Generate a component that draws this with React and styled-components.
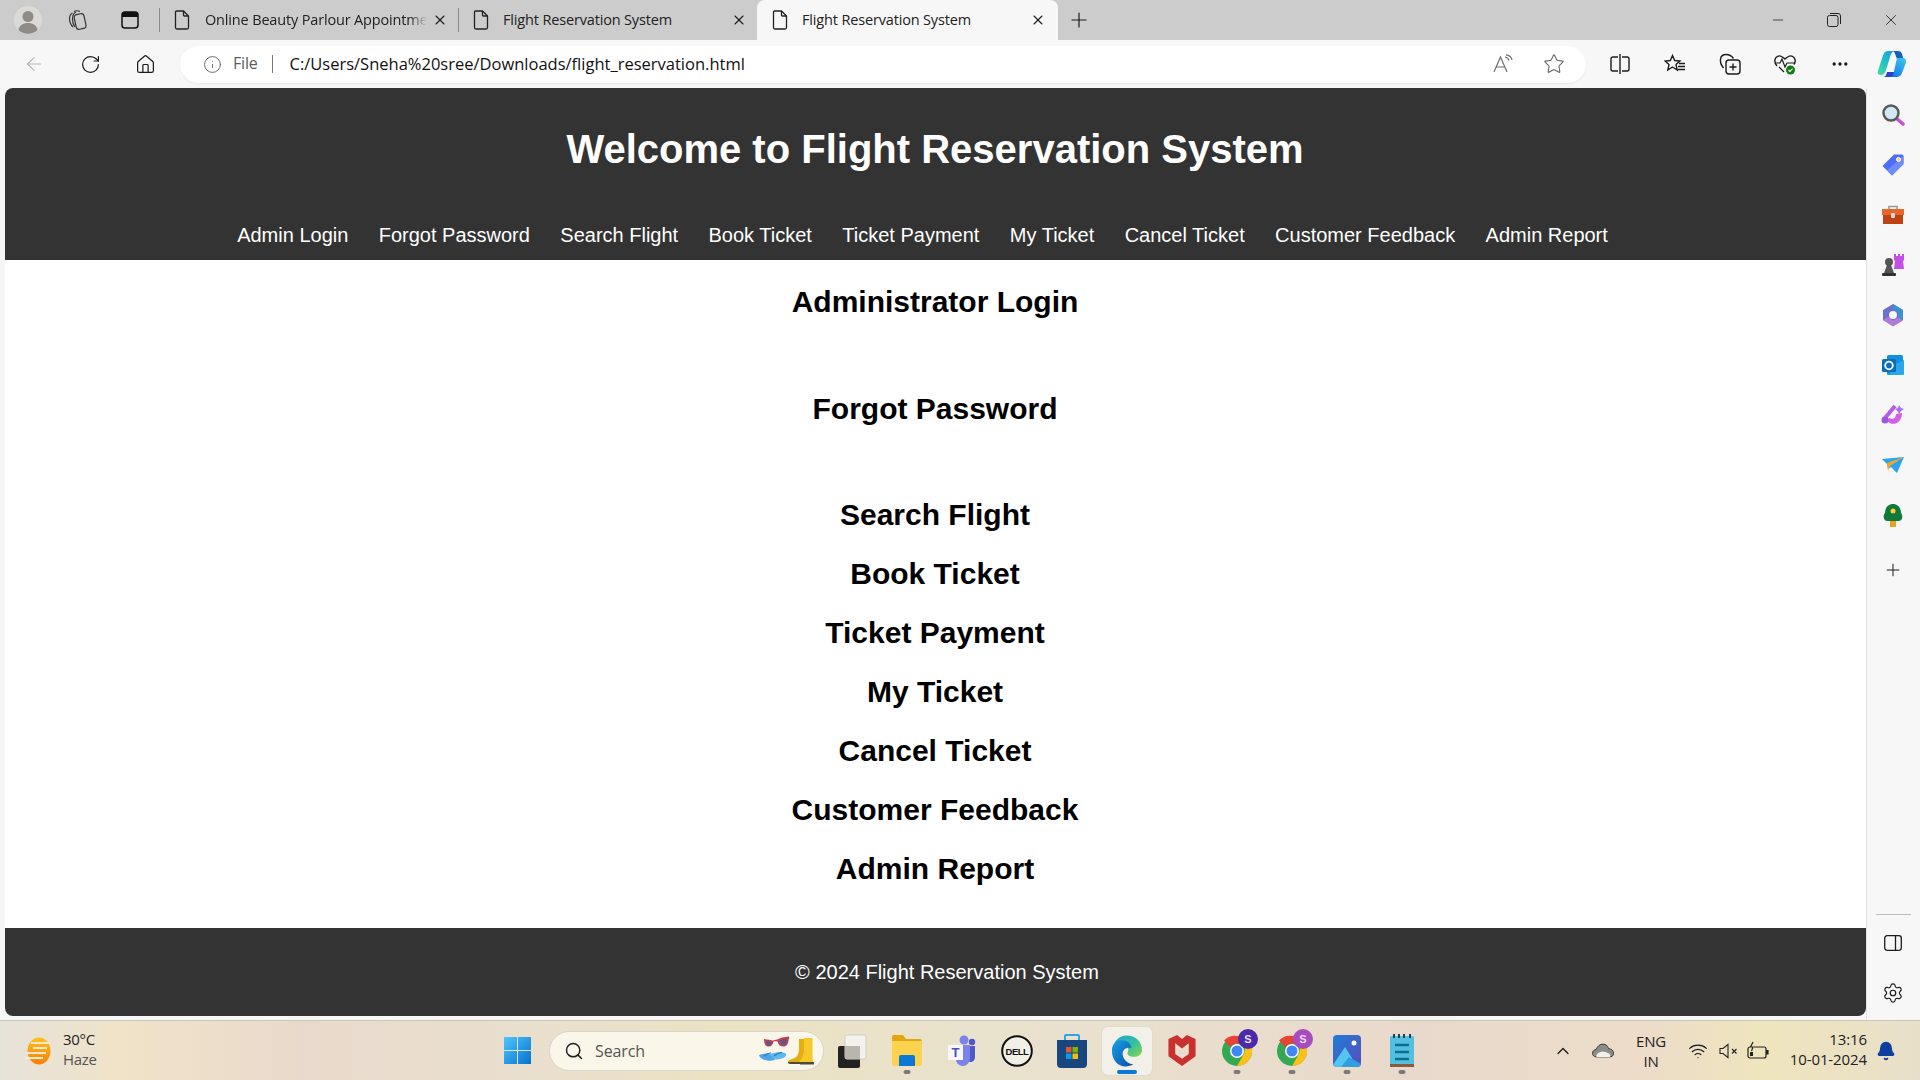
import React from "react";
import styled, { createGlobalStyle } from "styled-components";
import { ArrowLeft, RotateCw, Home, Info, Star, Minus, X, Plus, Ellipsis, Settings, ChevronUp, Search, Wifi, Bell } from "lucide-react";

const Global = createGlobalStyle`
  html, body { margin: 0; padding: 0; width: 1920px; height: 1080px; overflow: hidden; }
  * { box-sizing: border-box; }
  #root { width: 1920px; height: 1080px; }
`;
const UI = `"Open Sans", "Noto Sans", sans-serif`;
const WEB = `"Liberation Sans", Arial, sans-serif`;

const Desktop = styled.div`display: flex; flex-direction: column; width: 1920px; height: 1080px; background: #f7f7f7; font-family: ${UI}; color: #1a1a1a;`;

/* tab strip */
const TabStrip = styled.div`display: flex; align-items: stretch; height: 40px; background: #cccccc; flex: none;`;
const StripIcon = styled.div`width: ${p => p.$w}px; margin-left: ${p => p.$ml || 0}px; display: flex; align-items: center; justify-content: center; flex: none;`;
const Sep = styled.div`width: 1px; height: 24px; background: #8a8a8a; align-self: center; flex: none;`;
const Tab = styled.div`
  width: ${p => p.$w}px; flex: none; display: flex; align-items: center; padding-left: ${p => p.$pl}px; position: relative;
  background: ${p => p.$active ? "#f7f7f7" : "transparent"}; border-radius: 8px 8px 0 0; font-size: 14.5px; letter-spacing: -0.16px;
`;
const TabTitle = styled.span`
  margin-left: ${p => p.$ml}px; width: ${p => p.$w}px; overflow: hidden; white-space: nowrap; color: #222; flex: none; padding-bottom: 2px;
  ${p => p.$fade ? "mask-image: linear-gradient(to right, #000 92%, transparent);" : ""}
`;
const TabClose = styled.div`margin-left: auto; margin-right: ${p => p.$mr}px; display: flex;`;
const WinControls = styled.div`margin-left: auto; display: flex; align-items: center; padding-right: 20px; gap: 41px;`;

/* toolbar */
const Toolbar = styled.div`display: flex; align-items: center; height: 48px; background: #f7f7f7; flex: none;`;
const NavIcon = styled.div`width: ${p => p.$w}px; margin-left: ${p => p.$ml || 0}px; display: flex; justify-content: center; flex: none; color: ${p => p.$c || "#1c1c1c"};`;
const Address = styled.div`
  width: 1406px; height: 37px; margin-left: ${p => p.$ml || 0}px; background: #fff; border-radius: 19px; display: flex; align-items: center; flex: none;
  box-shadow: 0 1px 2px rgba(0,0,0,.06); padding-left: 23px; position: relative;
`;
const FileLabel = styled.span`font-size: 16px; color: #5c5c5c; margin-left: 11px; letter-spacing: -.2px; padding-bottom: 2px;`;
const AddrSep = styled.div`width: 1px; height: 18px; background: #777; margin: 0 17px 0 14px;`;
const Url = styled.span`font-size: 16.5px; color: #111; white-space: nowrap; padding-bottom: 2px;`;
const AddrTools = styled.div`margin-left: auto; display: flex; align-items: center; gap: 28px; padding-right: 21px;`;
const ToolGroup = styled.div`display: flex; align-items: center; margin-left: 7px;`;

/* middle */
const Middle = styled.div`display: flex; height: 932px; flex: none;`;
const Page = styled.div`
  width: 1861px; height: 928px; margin-left: 4.5px; border-radius: 8px; overflow: hidden; background: #fff; display: flex; flex-direction: column; font-family: ${WEB}; flex: none;
`;
const Header = styled.header`height: 172px; background: #333; color: #fff; text-align: center; padding-top: 38px; flex: none;`;
const Title = styled.h1`margin: 0; font-size: 40px; line-height: 46px; font-weight: 700;`;
const NavBar = styled.nav`display: flex; justify-content: center; gap: 30.4px; margin-top: 52px; padding-right: 25px;`;
const NavLink = styled.a`font-size: 20px; line-height: 23px; color: #fff; white-space: nowrap;`;
const Main = styled.main`flex: 1; padding-top: 25px; text-align: center; color: #000;`;
const Heading = styled.h2`margin: 0 0 ${p => p.$tall ? 72.5 : 25}px; font-size: 30px; line-height: 34px; font-weight: 700;`;
const Footer = styled.footer`height: 88px; background: #333; color: #fff; font-size: 20px; display: flex; align-items: center; justify-content: center; padding-left: 24px; flex: none;`;

const Side = styled.aside`flex: 1; display: flex; flex-direction: column; align-items: center; padding-top: 2px; border-left: 1px solid #e3e3e3; height: 932px;`;
const SideIcon = styled.div`height: ${p => p.$h || 50}px; width: 100%; display: flex; align-items: center; justify-content: center; flex: none;`;
const SideRule = styled.div`width: 35px; height: 1px; background: #bdbdbd; margin-top: auto; margin-bottom: 3px;`;

/* taskbar */
const Taskbar = styled.div`
  flex: none; height: 60px; display: flex; align-items: stretch; border-top: 1px solid #c9c5bb;
  background: linear-gradient(90deg, #e6e3da 0, #f0e3c8 120px, #e9d9cc 300px, #e9dfce 520px, #ebe2c3 720px, #e9e2cd 1000px, #e9d9cc 1420px, #ecdcc8 1650px, #efe5bd 1760px, #e8dfca 1920px);
`;
const Weather = styled.div`width: 490px; display: flex; align-items: center; padding-left: 25px; flex: none;`;
const WeatherText = styled.div`margin-left: 12px; font-size: 15px; line-height: 20px; letter-spacing: -.3px; color: #222; padding-bottom: 4px; span { display: block; color: #555; }`;
const Center = styled.div`display: flex; align-items: center; flex: none;`;
const Slot = styled.div`
  width: 55px; height: 48px; display: flex; align-items: center; justify-content: center; position: relative; flex: none; border-radius: 5px;
  ${p => p.$active ? "background: #f3f0e9; box-shadow: 0 0 1px rgba(0,0,0,.2); width: 50px; margin: 0 2.5px;" : ""}
`;
const RunDot = styled.i`position: absolute; bottom: 1px; left: 50%; transform: translateX(-50%); height: 4px; width: ${p => p.$on ? 20 : 7}px; border-radius: 2px; background: ${p => p.$on ? "#0a78d4" : "#7a7a7a"};`;
const SearchPill = styled.div`width: 275px; height: 40px; margin-left: 4px; border-radius: 20px; background: #faf6ea; border: 1px solid #d9d5c8; display: flex; align-items: center; padding-left: 14px; position: relative; flex: none;`;
const SearchText = styled.span`font-size: 16px; color: #555; margin-left: 11px; letter-spacing: -.1px;`;
const BeachArt = styled.div`position: absolute; right: 9px; top: 4px; display: flex;`;
const Tray = styled.div`flex: 1; display: flex; align-items: center; position: relative;`;
const TrayIcon = styled.div`width: ${p => p.$w}px; margin-left: ${p => p.$ml || 0}px; display: flex; justify-content: center; flex: none;`;
const Lang = styled.div`font-size: 15px; line-height: 20px; text-align: center; width: 40px; margin-left: 16px; letter-spacing: -.2px; color: #222; flex: none;`;
const Clock = styled.div`font-size: 15px; line-height: 20px; text-align: right; width: 90px; margin-left: 8px; color: #222; flex: none; letter-spacing: -.1px; padding-bottom: 4px;`;

const DocIcon = () => (
  <svg width="16" height="20" viewBox="0 0 16 20" fill="none" stroke="#222" strokeWidth="1.3"><path d="M2.5 1h7l5 5v11.5a1.5 1.5 0 0 1-1.5 1.5H3a1.5 1.5 0 0 1-1.5-1.5V2a1 1 0 0 1 1-1Z" /><path d="M9.5 1v4a1 1 0 0 0 1 1h4" /></svg>
);
const Avatar = () => (
  <svg width="28" height="28" viewBox="0 0 28 28"><circle cx="14" cy="14" r="14" fill="#dcdad6" /><circle cx="14" cy="10.5" r="5.5" fill="#8f8b86" /><path d="M4.5 24c1-5 4.5-7 9.5-7s8.500 2 9.500 7a14 14 0 0 1-19 0Z" fill="#8f8b86" /></svg>
);
const CollectionsOutline = () => (
  <svg width="24" height="24" viewBox="0 0 24 24" fill="none" stroke="#333" strokeWidth="1.2"><rect x="10" y="6" width="10" height="15" rx="3" transform="rotate(-12 15 13)" /><path d="M8 19c-2-2-3.500-5-3.500-8 0-3 1-5 3-6M11 4C9 5 7.500 8 7.500 11s1 6 2.500 8" /><path d="M9 3.500c2-1 4-1 6 0" /></svg>
);
const VerticalTabs = () => (
  <svg width="20" height="20" viewBox="0 0 20 20"><rect x="2" y="2" width="16" height="16" rx="3" fill="none" stroke="#111" strokeWidth="1.5" /><path d="M2 5a3 3 0 0 1 3-3h10a3 3 0 0 1 3 3v2H2Z" fill="#111" /></svg>
);
const Restore = () => (
  <svg width="14" height="14" viewBox="0 0 14 14" fill="none" stroke="#222" strokeWidth="1"><rect x=".5" y="2.500" width="10.500" height="11" rx="2" /><path d="M3 .5h8a2.500 2.500 0 0 1 2.500 2.500v8" /></svg>
);
const ReadAloud = () => (
  <svg width="22" height="20" viewBox="0 0 22 20" fill="none" stroke="#6d6d6d" strokeWidth="1.2"><path d="M1 18 7.500 3 14 18M3.500 13h8" /><path d="M12 3c2 .3 3.500 1.500 4 3.500M13 .8c3 .3 5.500 2.300 6 5.200" /></svg>
);
const SplitScreen = () => (
  <svg width="20" height="22" viewBox="0 0 20 22" fill="none" stroke="#1c1c1c" strokeWidth="1.4"><path d="M8 4H3a2 2 0 0 0-2 2v10a2 2 0 0 0 2 2h5M12 4h5a2 2 0 0 1 2 2v10a2 2 0 0 1-2 2h-5" /><path d="M10 1v20" /></svg>
);
const Favs = () => (
  <svg width="22" height="20" viewBox="0 0 22 20" fill="none" stroke="#1c1c1c" strokeWidth="1.4"><path d="m8.500 1.500 2.200 5 5.300.5-4 3.600 1.200 5.400L8.500 13l-4.700 3 1.200-5.400L1 7l5.300-.5Z" /><path d="M15 9.500h6M14 12.500h7M13.500 15.500h7.500" /></svg>
);
const CollAdd = () => (
  <svg width="22" height="22" viewBox="0 0 22 22" fill="none" stroke="#1c1c1c" strokeWidth="1.4"><rect x="7" y="7" width="14" height="14" rx="3" /><path d="M14 10.500v7M10.500 14h7" /><path d="M4.500 15C2 12 1 9 1.500 6 2 3 4 1.500 7 1.500c3 0 5.500 1 7.500 4" /></svg>
);
const HealthHeart = () => (
  <svg width="24" height="24" viewBox="0 0 24 24" fill="none"><path d="M4 14C2 12 1.500 10 2 7.500 2.700 4.500 6 3 8.500 4.500 10 5.300 11 6 12 7c1-1 2-1.700 3.500-2.500C18 3 21.300 4.500 22 7.500c.4 2 0 3.500-1 5" stroke="#1c1c1c" strokeWidth="1.4" /><path d="M2 11h5l2-4 3 8 2-4h8M6 15l5 5" stroke="#1c1c1c" strokeWidth="1.2" /><circle cx="17.500" cy="18" r="4.500" fill="#107c10" /><path d="m15.500 18 1.500 1.500 2.500-2.800" stroke="#fff" strokeWidth="1.100" /></svg>
);
const Copilot = () => (
  <svg width="30" height="28" viewBox="0 0 30 28">
    <defs>
      <linearGradient id="cpA" x1="0.8" y1="0" x2="0.2" y2="1"><stop offset="0" stopColor="#1f9fe0" /><stop offset=".55" stopColor="#22c4c0" /><stop offset="1" stopColor="#46dba0" /></linearGradient>
      <linearGradient id="cpB" x1="0.8" y1="0" x2="0.2" y2="1"><stop offset="0" stopColor="#3ac4f0" /><stop offset="1" stopColor="#1478e8" /></linearGradient>
    </defs>
    <path d="M16 1h5c2 0 3.500 1 4 3l1.500 5H20l-1.500-4C18 3 17 1.500 16 1Z" fill="#1a5fb8" />
    <path d="M10 22h8l-1 5H7c2-.5 2.500-3 3-5Z" fill="#2b42d0" />
    <path d="M11 1h7c-2 0-3.500 1.500-4.500 4.500L9 20c-.8 3-2.500 5-5 5H3.500C1.200 25 .2 23 1 20.500L6 5.500C7 2.500 8.500 1 11 1Z" fill="url(#cpA)" />
    <path d="M20 8h5.500c2.700 0 4.300 2 3.500 4.500L25 23c-.9 2.700-3 4-5.500 4H12.500c2 0 3.300-1.300 4-3.500L20 8Z" fill="url(#cpB)" />
  </svg>
);
const Side1 = () => (<svg width="24" height="24" viewBox="0 0 24 24"><path d="m15 15 7 6" stroke="#c94fd8" strokeWidth="3.500" strokeLinecap="round" /><circle cx="10" cy="10" r="7.500" fill="#cfe8fa" stroke="#5a5a5a" strokeWidth="2.500" /></svg>);
const Side2 = () => (<svg width="24" height="24" viewBox="0 0 24 24"><path d="M13 1.500h8a1.500 1.500 0 0 1 1.500 1.500v8L11 22.500 1.500 13Z" fill="#4f6cf5" /><path d="M22.500 3v8L11 22.500 6 17Z" fill="#6d8bfa" /><circle cx="17.500" cy="6.500" r="2" fill="#ffd23f" stroke="#fff" /></svg>);
const Side3 = () => (<svg width="24" height="22" viewBox="0 0 24 22"><path d="M8 5V2.500h8V5" fill="none" stroke="#9c9c9c" strokeWidth="1.600" /><path d="M1 5h22v6H1Z" fill="#e8662a" /><path d="M2 11h20v9H2Z" fill="#bd4315" /><rect x="10" y="9" width="4" height="5" rx="1" fill="#d8d8d8" /></svg>);
const Side4 = () => (<svg width="24" height="24" viewBox="0 0 24 24"><path d="M13 1h2v2h2V1h2v2h2V1h2v6l-1 1 1 8H13l1-8-1-1Z" fill="#c44fe6" /><circle cx="8" cy="9" r="4" fill="#555" /><path d="M6 12h4l3 8H3Z" fill="#555" /><rect x="1" y="20" width="14" height="3" rx="1" fill="#333" /></svg>);
const Side5 = () => (<svg width="22" height="24" viewBox="0 0 22 24"><path d="M11 1 21 7v10l-10 6L1 17V7Z" fill="#6a6fd0" /><path d="M11 1 21 7v10l-5-3V9.500L11 6.500Z" fill="#3d8fd8" /><path d="M1 17l5-3 5 3.500 5-3 5 3-10 6Z" fill="#b07ad8" /><circle cx="11" cy="12" r="4" fill="#f7f7f7" /></svg>);
const Side6 = () => (<svg width="24" height="22" viewBox="0 0 24 22"><rect x="6" y="1" width="16" height="20" rx="1.500" fill="#1490df" /><path d="M13 11 23 6v14a1 1 0 0 1-1 1H8Z" fill="#28a8ea" /><rect x="1" y="5" width="14" height="13" rx="1.500" fill="#0a6cbd" /><circle cx="8" cy="11.500" r="3.800" fill="none" stroke="#fff" strokeWidth="1.800" /></svg>);
const Side7 = () => (<svg width="24" height="24" viewBox="0 0 24 24"><path d="M14 3 4 15" stroke="#b45ee8" strokeWidth="4" /><path d="M6 18c6 6 15 2 15-8l-6 1c0 4-3 6-7 4Z" fill="#d65fe8" /><circle cx="4" cy="17" r="3.500" fill="#9a58d8" /><path d="m18 2 2 3 3 1-3 2-2 3-1.500-3L14 6l3-1Z" fill="#a86ee8" /></svg>);
const Side8 = () => (<svg width="24" height="18" viewBox="0 0 24 18"><path d="M1 3 23 1 16 17l-6-6-3 2-1-5Z" fill="#2aa4f4" /><path d="M6 7 23 1 9 10l-2 5Z" fill="#f5a623" /></svg>);
const Side9 = () => (<svg width="20" height="24" viewBox="0 0 20 24"><rect x="7" y="17" width="6" height="7" fill="#e8a020" /><path d="M10 1c5 0 8 4 8 9 2 2 2 8-2 8H4c-4 0-4-6-2-8 0-5 3-9 8-9Z" fill="#0f7b3a" /><circle cx="10" cy="8" r="2.500" fill="#ffc83d" /></svg>);
const PanelIcon = () => (<svg width="18" height="16" viewBox="0 0 18 16" fill="none" stroke="#1c1c1c" strokeWidth="1.3"><rect x=".7" y=".7" width="16.600" height="14.600" rx="2.500" /><path d="M11.500 .7v14.600" /></svg>);

const Sun = () => (<svg width="26" height="28" viewBox="0 0 26 28"><defs><linearGradient id="sunG" x1="0" y1="0" x2="0" y2="1"><stop offset="0" stopColor="#ffc21a" /><stop offset="1" stopColor="#f77f0a" /></linearGradient></defs><ellipse cx="14" cy="14" rx="11.500" ry="13.500" fill="url(#sunG)" /><path d="M6 6h20M8 11h14M1 16h20M0 21h18" stroke="#f3ead0" strokeWidth="2" /></svg>);
const WinLogo = () => (<svg width="29" height="29" viewBox="0 0 29 29"><defs><linearGradient id="winG" x1="0" y1="0" x2="1" y2="1"><stop offset="0" stopColor="#4fc6fb" /><stop offset="1" stopColor="#0472cf" /></linearGradient></defs><path d="M1 1h13v13H1ZM15 1h13v13H15ZM1 15h13v13H1ZM15 15h13v13H15Z" fill="url(#winG)" /></svg>);
const Beach = () => (
  <svg width="56" height="30" viewBox="0 0 56 30">
    <path d="M6 3c4 .5 7 1 9 1.500C17 4 21 3 24 1.500l7-1 .3 2-.8 1c0 4.500-2 7-5 7-3.500 0-5.300-2-6-5-1.500-.5-3-.5-4 0-.5 3-2.500 5.500-5.500 5S6 7 6 3Z" fill="#c23d5c" />
    <path d="M8 5c2 0 4 .5 6 1-.5 2.500-2 4-3.700 3.700C8.500 9.400 8 7.500 8 5ZM21.500 4.500c2-1 5-1.500 7.500-1.800 0 3.500-1.500 6.300-3.800 6.300-2 0-3.200-2-3.700-4.500Z" fill="#5d5a80" />
    <path d="M1 19c5-2 10-2 12 0 1.500 1.500 5 3 4 4.500-2 1.500-7 1.500-10 .5-3-1-6-3-6-5Z" fill="#4aa6e4" />
    <path d="M12 18c5-2 12-2.500 15-1 2 1 1 3 0 4-3 2-8 3-11 2-1.500-1-3-3-4-5Z" fill="#5fb8ee" />
    <path d="M6 20c3-2 4-3 7-3M16 20c3-3 5-3 8-3.500" stroke="#2c7cc0" strokeWidth="1.200" fill="none" />
    <path d="M41 3h6v17c0 2 1 3 1 5v2H33c-2 0-3-1-3-2 2-2 7-2 9-5 1-1.500 2-4 2-7Z" fill="#e5ad12" />
    <path d="M46 2h8.500v19c0 1 .5 3 .5 4v2H41c0-2 2-3 3-5 1-3 2-6 2-9Z" fill="#f6c82a" />
    <path d="M30 26h18v2H32c-1.500 0-2-1-2-2ZM42 26h14v2.500H42Z" fill="#4d4a3c" />
  </svg>
);
const TaskView = () => (<svg width="30" height="34" viewBox="0 0 30 34"><rect x="1" y="12" width="22" height="22" rx="2" fill="#222" /><rect x="8" y="1" width="21" height="24" rx="2" fill="#f3f2ee" stroke="#d0cfca" /><rect x="8" y="12" width="15" height="13" fill="#b9b6ae" /></svg>);
const Explorer = () => (<svg width="30" height="32" viewBox="0 0 30 32"><path d="M0 2a2 2 0 0 1 2-2h9l3 4h14a2 2 0 0 1 2 2v4H0Z" fill="#e2a70f" /><path d="M0 6h30v23a2 2 0 0 1-2 2H2a2 2 0 0 1-2-2Z" fill="#fbd34f" /><path d="M7 22a2 2 0 0 1 2-2h12a2 2 0 0 1 2 2v9H7Z" fill="#0a78d4" /></svg>);
const Teams = () => (<svg width="28" height="32" viewBox="0 0 28 32"><circle cx="16" cy="5" r="4.500" fill="#7b83eb" /><circle cx="24" cy="7" r="3.200" fill="#5059c9" /><path d="M19 11h8v11c0 3-2 5-5 5l-3-1Z" fill="#5059c9" /><path d="M8 10h14v13c0 4-3 8-7 8s-7-3-7-7Z" fill="#7b83eb" /><rect x="0" y="10" width="15" height="15" fill="#f7f7fa" /><text x="7.500" y="22" fontSize="13" fontWeight="700" fill="#4b53bc" textAnchor="middle" fontFamily="Liberation Sans">T</text></svg>);
const Dell = () => (<svg width="32" height="32" viewBox="0 0 32 32"><circle cx="16" cy="16" r="14.800" fill="#f2efe6" stroke="#111" strokeWidth="2" /><text x="16" y="19.500" fontSize="9.500" fontWeight="700" fill="#111" textAnchor="middle" fontFamily="Liberation Sans" letterSpacing="-.5">DELL</text></svg>);
const Store = () => (<svg width="30" height="34" viewBox="0 0 30 34"><path d="M8 6V2a1 1 0 0 1 1-1h12a1 1 0 0 1 1 1v4" fill="none" stroke="#2aa8e0" strokeWidth="2" /><path d="M0 6h30v24a4 4 0 0 1-4 4H4a4 4 0 0 1-4-4Z" fill="#17477e" /><path d="M9 13h5.500v5.500H9Z" fill="#e8562a" /><path d="M15.500 13H21v5.500h-5.500Z" fill="#7ab800" /><path d="M9 19.500h5.500V25H9Z" fill="#0a9be8" /><path d="M15.500 19.500H21V25h-5.500Z" fill="#fbbc09" /></svg>);
const Edge = () => (
  <svg width="31" height="32" viewBox="0 0 32 32">
    <defs>
      <linearGradient id="edA" x1="0" y1="0" x2="1" y2="1"><stop offset="0" stopColor="#1f9fd8" /><stop offset=".55" stopColor="#35c1a0" /><stop offset="1" stopColor="#86d845" /></linearGradient>
      <linearGradient id="edB" x1="0" y1="0" x2="1" y2="1"><stop offset="0" stopColor="#16a0e6" /><stop offset="1" stopColor="#0b4fa8" /></linearGradient>
    </defs>
    <path d="M16 0c9 0 16 6 16 15 0 5-4 7-8 7-5 0-7-2-7-4 0-1 1-2 1-3 0-4-5-7-9-6-4 1-7 4-8 7C2 7 8 0 16 0Z" fill="url(#edA)" />
    <path d="M1 16C1 8 6 5 11 5c5 0 10 3 10 8-3-1-9 0-9 6 0 5 5 10 11 11-2 1-5 2-8 2C7 32 1 25 1 16Z" fill="url(#edB)" />
  </svg>
);
const McAfee = () => (<svg width="28" height="31" viewBox="0 0 28 32"><path fillRule="evenodd" d="M0 4 9 0l5 4 5-4 9 4v18L14 32 0 22ZM7 8.500v11l7 5 7-5v-11l-7 5.500Z" fill="#c8312e" /></svg>);
const Chrome = ({ c }) => (
  <svg width="36" height="37" viewBox="0 0 36 37" style={{ transform: "translate(3px, -3px)" }}>
    <circle cx="15" cy="22" r="15" fill="#34a853" />
    <path d="M15 7a15 15 0 0 1 13 7.500H15a7.500 7.500 0 0 0-6.500 3.750L2 11.500A15 15 0 0 1 15 7Z" fill="#ea4335" />
    <path d="M28 14.500A15 15 0 0 1 15 37l6.500-11.250A7.500 7.500 0 0 0 22.500 22 7.500 7.500 0 0 0 21 14.500Z" fill="#fbc116" />
    <circle cx="15" cy="22" r="7" fill="#fff" />
    <circle cx="15" cy="22" r="5.500" fill="#4285f4" />
    <circle cx="26" cy="10" r="10" fill={c} />
    <text x="26" y="14" fontSize="11" fontWeight="700" fill="#e8dcf4" textAnchor="middle" fontFamily="Liberation Sans">S</text>
  </svg>
);
const Photos = () => (<svg width="28" height="32" viewBox="0 0 28 32"><defs><linearGradient id="phG" x1="0" y1="0" x2="1" y2="1"><stop offset="0" stopColor="#1f7ed8" /><stop offset="1" stopColor="#5a4cb8" /></linearGradient></defs><rect width="28" height="32" rx="4" fill="url(#phG)" /><circle cx="21" cy="8" r="2.500" fill="#fff" /><path d="M0 30 12 12l7 11-3 9H4a4 4 0 0 1-4-2Z" fill="#54c5f0" /><path d="m8 32 8-10 12 7v0a4 4 0 0 1-4 3Z" fill="#2f9fe0" /></svg>);
const Notepad = () => (<svg width="24" height="36" viewBox="0 0 24 36"><rect y="3" width="24" height="31" rx="1.500" fill="#55bfe0" /><path d="M0 31h24v3H0Z" fill="#8a5a3a" /><path d="M4 1v4M9 1v4M14 1v4M20 1v4" stroke="#14455c" strokeWidth="2" /><path d="M5 12h14M5 19h14M5 26h14" stroke="#0e6f94" strokeWidth="2.500" /></svg>);
const OneDrive = () => (<svg width="22" height="15" viewBox="0 0 24 16"><path d="M5 15c-3 0-4.500-2-4.500-4 0-2.500 2-4 4-4C6 3 9 1 12 1c3 0 5.500 2 6 5 3 0 5.500 2 5.500 5s-2 4-4.500 4Z" fill="#8d8d88" stroke="#333" strokeWidth="1" /><path d="M5 15c-1-3 2-5 6-6 3 0 5 1 7 2s3 4 1 4Z" fill="#f2f0ea" /></svg>);
const Mute = () => (<svg width="20" height="16" viewBox="0 0 20 16" fill="none" stroke="#222" strokeWidth="1.100"><path d="M1 5.500h3L9 1.500v13L4 10.500H1Z" /><path d="m13 6 4.500 4.500M17.500 6 13 10.500" /></svg>);
const Battery = () => (<svg width="22" height="20" viewBox="0 0 22 20" fill="none" stroke="#222" strokeWidth="1.200"><path d="M7 6h10a2 2 0 0 1 2 2v7a2 2 0 0 1-2 2H3a2 2 0 0 1-2-2V8a2 2 0 0 1 2-2" /><path d="M19 9.500h2v3.500h-2" fill="#222" /><path d="M6 1 3.500 6H6l-1.500 4" /><rect x="3" y="11" width="3" height="4" fill="#222" stroke="none" /></svg>);

const apps = [
  [<TaskView />], [<Explorer />, 1], [<Teams />], [<Dell />], [<Store />], [<Edge />, 2], [<McAfee />],
  [<Chrome c="#4a2aa8" />, 1], [<Chrome c="#a64cc0" />, 1], [<Photos />, 1], [<Notepad />, 1],
];
const sections = [["Administrator Login", 1], ["Forgot Password", 1], ["Search Flight"], ["Book Ticket"], ["Ticket Payment"], ["My Ticket"], ["Cancel Ticket"], ["Customer Feedback"], ["Admin Report"]];
const links = ["Admin Login", "Forgot Password", "Search Flight", "Book Ticket", "Ticket Payment", "My Ticket", "Cancel Ticket", "Customer Feedback", "Admin Report"];
const sideIcons = [Side1, Side2, Side3, Side4, Side5, Side6, Side7, Side8, Side9];

export default function App() {
  return (
    <Desktop>
      <Global />
      <TabStrip>
        <StripIcon $w={28} $ml={14}><Avatar /></StripIcon>
        <StripIcon $w={24} $ml={23}><CollectionsOutline /></StripIcon>
        <StripIcon $w={20} $ml={31}><VerticalTabs /></StripIcon>
        <StripIcon $w={1} $ml={19}><Sep /></StripIcon>
        <Tab $w={298} $pl={14}>
          <DocIcon /><TabTitle $ml={15} $w={222} $fade>Online Beauty Parlour Appointment</TabTitle>
          <TabClose $mr={10}><X size={16} strokeWidth={1.6} /></TabClose>
        </Tab>
        <Sep />
        <Tab $w={298} $pl={14}>
          <DocIcon /><TabTitle $ml={14} $w={220}>Flight Reservation System</TabTitle>
          <TabClose $mr={10}><X size={16} strokeWidth={1.6} /></TabClose>
        </Tab>
        <Tab $active $w={301} $pl={15}>
          <DocIcon /><TabTitle $ml={14} $w={220}>Flight Reservation System</TabTitle>
          <TabClose $mr={12}><X size={16} strokeWidth={1.6} /></TabClose>
        </Tab>
        <StripIcon $w={24} $ml={9}><Plus size={24} strokeWidth={1.2} /></StripIcon>
        <WinControls>
          <Minus size={16} strokeWidth={1.1} />
          <Restore />
          <X size={18} strokeWidth={1.1} />
        </WinControls>
      </TabStrip>
      <Toolbar>
        <NavIcon $w={24} $ml={22} $c="#b5b5b5"><ArrowLeft size={22} strokeWidth={1.2} /></NavIcon>
        <NavIcon $w={24} $ml={32}><RotateCw size={21} strokeWidth={1.4} /></NavIcon>
        <NavIcon $w={24} $ml={31}><Home size={21} strokeWidth={1.4} /></NavIcon>
        <Address $ml={23}>
          <Info size={19} strokeWidth={1.1} color="#555" />
          <FileLabel>File</FileLabel>
          <AddrSep />
          <Url>C:/Users/Sneha%20sree/Downloads/flight_reservation.html</Url>
          <AddrTools>
            <ReadAloud />
            <Star size={22} strokeWidth={1.2} color="#666" />
          </AddrTools>
        </Address>
        <ToolGroup>
          <NavIcon $w={55} $ml={-1}><SplitScreen /></NavIcon>
          <NavIcon $w={55}><Favs /></NavIcon>
          <NavIcon $w={55}><CollAdd /></NavIcon>
          <NavIcon $w={55}><HealthHeart /></NavIcon>
          <NavIcon $w={55}><Ellipsis size={20} strokeWidth={2} /></NavIcon>
          <NavIcon $w={50}><Copilot /></NavIcon>
        </ToolGroup>
      </Toolbar>
      <Middle>
        <Page>
          <Header>
            <Title>Welcome to Flight Reservation System</Title>
            <NavBar>{links.map(l => <NavLink key={l}>{l}</NavLink>)}</NavBar>
          </Header>
          <Main>{sections.map(([t, tall]) => <Heading key={t} $tall={tall}>{t}</Heading>)}</Main>
          <Footer>© 2024 Flight Reservation System</Footer>
        </Page>
        <Side>
          {sideIcons.map((I, i) => <SideIcon key={i}><I /></SideIcon>)}
          <SideIcon $h={60}><Plus size={20} strokeWidth={1.2} /></SideIcon>
          <SideRule />
          <SideIcon><PanelIcon /></SideIcon>
          <SideIcon><Settings size={22} strokeWidth={1.3} /></SideIcon>
          <SideIcon $h={2} />
        </Side>
      </Middle>
      <Taskbar>
        <Weather>
          <Sun />
          <WeatherText>30°C<span>Haze</span></WeatherText>
        </Weather>
        <Center>
          <Slot><WinLogo /></Slot>
          <SearchPill>
            <Search size={20} strokeWidth={1.8} color="#222" />
            <SearchText>Search</SearchText>
            <BeachArt><Beach /></BeachArt>
          </SearchPill>
          {apps.map(([icon, run], i) => (
            <Slot key={i} $active={run === 2}>
              {icon}
              {run ? <RunDot $on={run === 2} /> : null}
            </Slot>
          ))}
        </Center>
        <Tray>
          <TrayIcon $w={20} $ml={124}><ChevronUp size={20} strokeWidth={1.5} /></TrayIcon>
          <TrayIcon $w={24} $ml={18}><OneDrive /></TrayIcon>
          <Lang>ENG<br />IN</Lang>
          <TrayIcon $w={22} $ml={16}><Wifi size={20} strokeWidth={1.4} /></TrayIcon>
          <TrayIcon $w={20} $ml={10}><Mute /></TrayIcon>
          <TrayIcon $w={22} $ml={8}><Battery /></TrayIcon>
          <Clock>13:16<br />10-01-2024</Clock>
          <TrayIcon $w={20} $ml={9}><Bell size={20} fill="#0f3f9e" color="#0f3f9e" /></TrayIcon>
        </Tray>
      </Taskbar>
    </Desktop>
  );
}
